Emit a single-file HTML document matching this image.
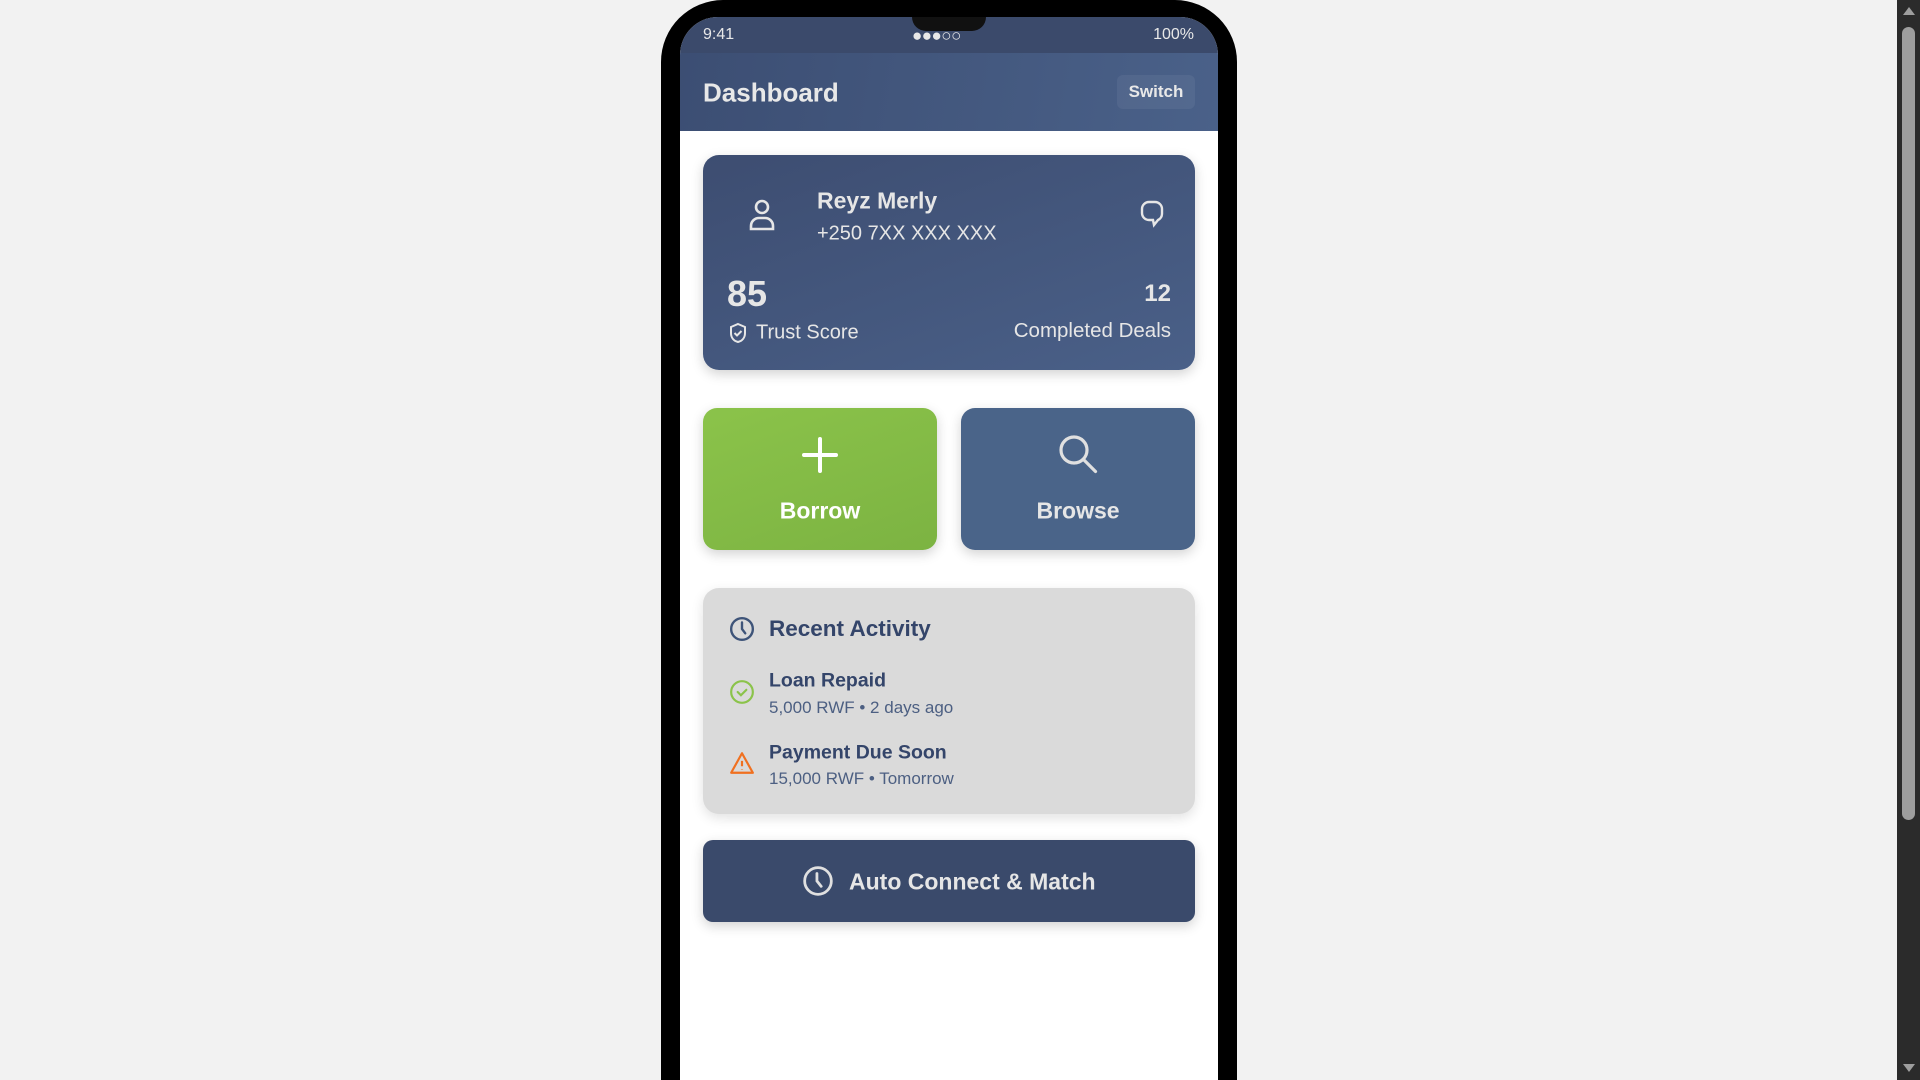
<!DOCTYPE html>
<html style="overflow:hidden;height:1080px"><head><meta charset="utf-8"><style>
*{box-sizing:border-box;margin:0;padding:0}
body{width:1920px;height:1080px;background:#f2f2f2;font-family:"Liberation Sans",sans-serif;position:relative;overflow:hidden}
.a{position:absolute}
.c{position:absolute;white-space:nowrap;transform:translateY(-50%)}
.phone{left:661px;top:0;width:576px;height:1080px;background:#000;border-radius:62px 62px 0 0}
.screen{left:680px;top:17px;width:538px;height:1063px;background:#fff;border-radius:38px 38px 0 0;overflow:hidden}
.status{left:0;top:0;width:538px;height:36px;background:#3b4a6b;color:#e8e8e8;font-size:16px}
.header{left:0;top:36px;width:538px;height:78px;background:linear-gradient(100deg,#3c4e73,#4a6189)}
.card{left:23px;top:138px;width:492px;height:215px;border-radius:16px;background:linear-gradient(160deg,#3d4d71,#4a6088);box-shadow:0 4px 12px rgba(0,0,0,.18);color:#e6e6e6}
.btn{top:391px;width:234px;height:142px;border-radius:14px;box-shadow:0 4px 12px rgba(0,0,0,.18);color:#fff;font-weight:bold;font-size:23px;text-align:center}
.act{left:23px;top:571px;width:492px;height:226px;border-radius:16px;background:#dadada;box-shadow:0 4px 12px rgba(0,0,0,.12);color:#34456a}
.auto{left:23px;top:823px;width:492px;height:82px;border-radius:10px;background:#3a4a6b;box-shadow:0 4px 12px rgba(0,0,0,.18);color:#e6e6e6;font-weight:bold;font-size:23px}
</style></head><body>
<div class="a phone"></div>
<div class="a screen">
 <div class="a status">
  <span class="c" style="left:23px;top:18px">9:41</span>
  <span class="c" style="left:232px;top:19px;font-size:17px;letter-spacing:-0.5px">●●●○○</span>
  <span class="c" style="right:24px;top:18px">100%</span>
 </div>
 <div class="a" style="left:232px;top:0;width:74px;height:14px;background:#111;border-radius:0 0 14px 14px"></div>
 <div class="a header">
  <span class="c" style="left:23px;top:40px;font-size:26px;font-weight:bold;color:#e8e8e8">Dashboard</span>
  <div class="a" style="left:437px;top:22px;width:78px;height:34px;background:rgba(255,255,255,.06);border-radius:6px;color:#e8e8e8;font-size:17px;font-weight:bold;text-align:center;line-height:34px">Switch</div>
 </div>
 <div class="a card">
  <svg class="a" style="left:44px;top:43px" width="30" height="34" viewBox="0 0 30 34" fill="none" stroke="#e6e6e6" stroke-width="2.6"><circle cx="15" cy="9" r="6"/><path d="M4 31v-3a8 8 0 0 1 8-8h6a8 8 0 0 1 8 8v3z"/></svg>
  <span class="c" style="left:114px;top:46px;font-size:23px;font-weight:bold">Reyz Merly</span>
  <span class="c" style="left:114px;top:79px;font-size:20px">+250 7XX XXX XXX</span>
  <svg class="a" style="left:435px;top:44px" width="28" height="32" viewBox="0 0 28 32" fill="none" stroke="#e6e6e6" stroke-width="2.4"><path d="M14 3h3a7 7 0 0 1 7 7v5a7 7 0 0 1-4 6l-4 5-1-5h-4a7 7 0 0 1-7-7v-4a7 7 0 0 1 7-7z"/></svg>
  <span class="c" style="left:24px;top:139px;font-size:36px;font-weight:bold">85</span>
  <svg class="a" style="left:25px;top:167px" width="20" height="22" viewBox="0 0 20 22" fill="none" stroke="#e6e6e6" stroke-width="2"><path d="M10 2l7 3v6c0 5-3 8-7 9-4-1-7-4-7-9V5z"/><path d="M6.5 11l2.5 2.5 4.5-4.5"/></svg>
  <span class="c" style="left:53px;top:178px;font-size:20px">Trust Score</span>
  <span class="c" style="right:24px;top:139px;font-size:24px;font-weight:bold">12</span>
  <span class="c" style="right:24px;top:176px;font-size:20.5px">Completed Deals</span>
 </div>
 <div class="a btn" style="left:23px;background:linear-gradient(160deg,#8bc34a,#7cb342)">
  <svg class="a" style="left:99px;top:29px" width="36" height="36" viewBox="0 0 36 36" stroke="#fff" stroke-width="4" stroke-linecap="round"><path d="M18 2v32M2 18h32"/></svg>
  <span class="c" style="left:0;width:234px;top:103px">Borrow</span>
 </div>
 <div class="a btn" style="left:281px;background:#4a6489;color:#e6e6e6">
  <svg class="a" style="left:96px;top:25px" width="42" height="42" viewBox="0 0 42 42" fill="none" stroke="#e0e0e0" stroke-width="3.2" stroke-linecap="round"><circle cx="17" cy="17" r="13"/><path d="M26.5 26.5l12 12"/></svg>
  <span class="c" style="left:0;width:234px;top:103px">Browse</span>
 </div>
 <div class="a act">
  <svg class="a" style="left:26px;top:28px" width="26" height="26" viewBox="0 0 24 24" fill="none" stroke="#3e5479" stroke-width="2.2" stroke-linecap="round"><circle cx="12" cy="12" r="10"/><path d="M12 6v6l3 4"/></svg>
  <span class="c" style="left:66px;top:41px;font-size:22.5px;font-weight:bold">Recent Activity</span>
  <svg class="a" style="left:26px;top:91px" width="26" height="26" viewBox="0 0 24 24" fill="none" stroke="#8bc34a" stroke-width="2" stroke-linecap="round"><circle cx="12" cy="12" r="10"/><path d="M8 12l3 3 5-5"/></svg>
  <span class="c" style="left:66px;top:93px;font-size:19.5px;font-weight:bold">Loan Repaid</span>
  <span class="c" style="left:66px;top:120px;font-size:17px;color:#4c5f82">5,000 RWF • 2 days ago</span>
  <svg class="a" style="left:26px;top:162px" width="26" height="26" viewBox="0 0 24 24" fill="none" stroke="#f07020" stroke-width="2" stroke-linejoin="round"><path d="M12 3l10 18H2z"/><path d="M12 10v5M12 18v.5"/></svg>
  <span class="c" style="left:66px;top:165px;font-size:19.5px;font-weight:bold">Payment Due Soon</span>
  <span class="c" style="left:66px;top:191px;font-size:17px;color:#4c5f82">15,000 RWF • Tomorrow</span>
 </div>
 <div class="a auto">
  <svg class="a" style="left:99px;top:25px" width="32" height="32" viewBox="0 0 30 30" fill="none" stroke="#e0e0e0" stroke-width="2.6" stroke-linecap="round"><circle cx="15" cy="15" r="12.5"/><path d="M14 8v7l4 5"/></svg>
  <span class="c" style="left:146px;top:42px">Auto Connect &amp; Match</span>
 </div>
</div>
<div class="a" style="left:1897px;top:0;width:23px;height:1080px;background:#2b2b2b"></div>
<div class="a" style="left:1902px;top:27px;width:13px;height:793px;background:#9e9e9e;border-radius:7px"></div>
<div class="a" style="left:1903px;top:7px;width:0;height:0;border-left:6px solid transparent;border-right:6px solid transparent;border-bottom:8px solid #9e9e9e"></div>
<div class="a" style="left:1903px;top:1064px;width:0;height:0;border-left:6px solid transparent;border-right:6px solid transparent;border-top:8px solid #9e9e9e"></div>
</body></html>
